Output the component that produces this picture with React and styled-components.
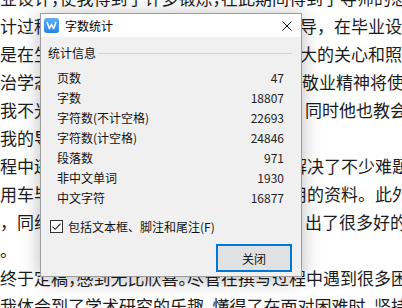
import styled, { createGlobalStyle } from 'styled-components';

const GlobalStyle = createGlobalStyle`
  html, body {
    margin: 0;
    padding: 0;
    background: #ffffff;
  }
  body {
    font-family: 'Noto Sans CJK SC', 'Noto Sans', sans-serif;
  }
`;

const docLines = [
  { full: '业设计，使我得到了许多锻炼，在此期间得到了导师的悉心指导和帮助' },
  { left: '计过程', right: '导，在毕业设计', offset: 300 },
  { left: '是在生', right: '大的关心和照顾', offset: 300 },
  { left: '治学态', right: '敬业精神将使我', offset: 302 },
  { left: '我不光', right: '同时他也教会了', offset: 305 },
  { left: '我的导', right: '', offset: 300 },
  { left: '程中还', right: '解决了不少难题', offset: 290 },
  { left: '用车毕', right: '用的资料。此外', offset: 290 },
  { left: '，同组', right: '出了很多好的建', offset: 305 },
  { left: '。', right: '', offset: 300 },
  { full: '终于定稿，感到无比欣喜。尽管在撰写过程中遇到很多困难' },
  { full: '我体会到了学术研究的乐趣，懂得了在面对困难时，坚持不懈' },
];

const stats = [
  ['页数', '47'],
  ['字数', '18807'],
  ['字符数(不计空格)', '22693'],
  ['字符数(计空格)', '24846'],
  ['段落数', '971'],
  ['非中文单词', '1930'],
  ['中文字符', '16877'],
];

function WpsIcon() {
  return (
    <svg width="15" height="15" viewBox="0 0 15 15">
      <defs>
        <linearGradient id="wps" x1="0" y1="0" x2="0" y2="1">
          <stop offset="0" stopColor="#5db0f7" />
          <stop offset="1" stopColor="#2383e6" />
        </linearGradient>
      </defs>
      <rect x="0" y="0" width="15" height="15" rx="3" fill="url(#wps)" />
      <path
        d="M3.2 4.6 L5.4 10.8 L7.5 6.2 L9.6 10.8 L11.8 4.6"
        fill="none"
        stroke="#ffffff"
        strokeWidth="1.5"
        strokeLinejoin="round"
        strokeLinecap="round"
      />
    </svg>
  );
}

export default function App() {
  return (
    <>
      <GlobalStyle />
      <Page>
        <Doc>
          {docLines.map((line, i) =>
            line.full ? (
              <Line key={i}>
                <FullText>{line.full}</FullText>
              </Line>
            ) : (
              <Line key={i}>
                <LeftText>{line.left}</LeftText>
                <RightText $offset={line.offset - 280}>{line.right}</RightText>
              </Line>
            )
          )}
        </Doc>

        <Dialog>
          <TitleBar>
            <WpsIcon />
            <Title>字数统计</Title>
            <CloseButton>
              <svg width="10" height="10" viewBox="0 0 10 10">
                <path d="M0.5 0.5 L9.5 9.5 M9.5 0.5 L0.5 9.5" stroke="#111" strokeWidth="1" />
              </svg>
            </CloseButton>
          </TitleBar>

          <Body>
            <GroupHeader>
              <GroupLabel>统计信息</GroupLabel>
              <Rule />
            </GroupHeader>

            <StatsList>
              {stats.map(([label, value]) => (
                <StatRow key={label}>
                  <span>{label}</span>
                  <StatValue>{value}</StatValue>
                </StatRow>
              ))}
            </StatsList>

            <CheckRow>
              <CheckBox>
                <svg width="11" height="11" viewBox="0 0 11 11">
                  <path d="M1.5 5.6 L4.2 8.3 L9.6 2.6" fill="none" stroke="#222" strokeWidth="1.1" />
                </svg>
              </CheckBox>
              <CheckLabel>包括文本框、脚注和尾注(F)</CheckLabel>
            </CheckRow>

            <Footer>
              <Button>关闭</Button>
            </Footer>
          </Body>
        </Dialog>
      </Page>
    </>
  );
}

const Page = styled.div`
  position: relative;
  width: 402px;
  height: 308px;
  overflow: hidden;
  background: #ffffff;
`;

const Doc = styled.div`
  margin-top: -16px;
  font-family: 'Noto Sans CJK SC', sans-serif;
  font-size: 17px;
  color: #1c1c1c;
`;

const Line = styled.div`
  display: grid;
  grid-template-columns: 280px 1fr;
  height: 28px;
  line-height: 28px;
  white-space: nowrap;
`;

const LeftText = styled.div`
  overflow: hidden;
`;

const RightText = styled.div`
  padding-left: ${(p) => p.$offset}px;
  overflow: hidden;
`;

const FullText = styled.div`
  grid-column: 1 / -1;
  overflow: hidden;
  font-feature-settings: 'halt';
`;

const Dialog = styled.div`
  position: absolute;
  left: 40px;
  top: 13px;
  width: 262px;
  height: 264px;
  box-sizing: border-box;
  border: 1px solid #9c9c9c;
  background: #f0f0f0;
  box-shadow: 0 2px 18px rgba(0, 0, 0, 0.28);
  display: flex;
  flex-direction: column;
  font-family: 'Noto Sans CJK SC', 'Noto Sans', sans-serif;
  font-size: 12px;
  color: #111;
`;

const TitleBar = styled.div`
  height: 23px;
  background: #ffffff;
  display: flex;
  align-items: center;
  padding-left: 3px;
`;

const Title = styled.div`
  margin-left: 6px;
  font-size: 12px;
  color: #000;
`;

const CloseButton = styled.div`
  margin-left: auto;
  margin-right: 9px;
  width: 10px;
  height: 10px;
  display: flex;
`;

const Body = styled.div`
  flex: 1;
  display: flex;
  flex-direction: column;
  padding: 8px 9px 0 7px;
`;

const GroupHeader = styled.div`
  height: 16px;
  display: flex;
  align-items: center;
`;

const GroupLabel = styled.div`
  line-height: 16px;
`;

const Rule = styled.div`
  flex: 1;
  height: 1px;
  margin-left: 2px;
  background: #d3d3d3;
`;

const StatsList = styled.div`
  margin-top: 6px;
  padding: 0 8px 0 9px;
  display: flex;
  flex-direction: column;
`;

const StatRow = styled.div`
  height: 20px;
  display: flex;
  align-items: center;
  justify-content: space-between;
`;

const StatValue = styled.span`
  color: #222;
`;

const CheckRow = styled.div`
  margin-top: 10px;
  height: 18px;
  display: flex;
  align-items: center;
  padding-left: 2px;
`;

const CheckBox = styled.div`
  width: 13px;
  height: 13px;
  box-sizing: border-box;
  border: 1px solid #333;
  background: #ffffff;
  display: flex;
  align-items: center;
  justify-content: center;
`;

const CheckLabel = styled.span`
  margin-left: 5px;
`;

const Footer = styled.div`
  margin-top: 9px;
  display: flex;
  justify-content: flex-end;
`;

const Button = styled.div`
  width: 76px;
  height: 28px;
  box-sizing: border-box;
  border: 2px solid #0078d7;
  background: #e1e1e1;
  display: flex;
  align-items: center;
  justify-content: center;
  font-size: 12px;
  color: #111;
`;
